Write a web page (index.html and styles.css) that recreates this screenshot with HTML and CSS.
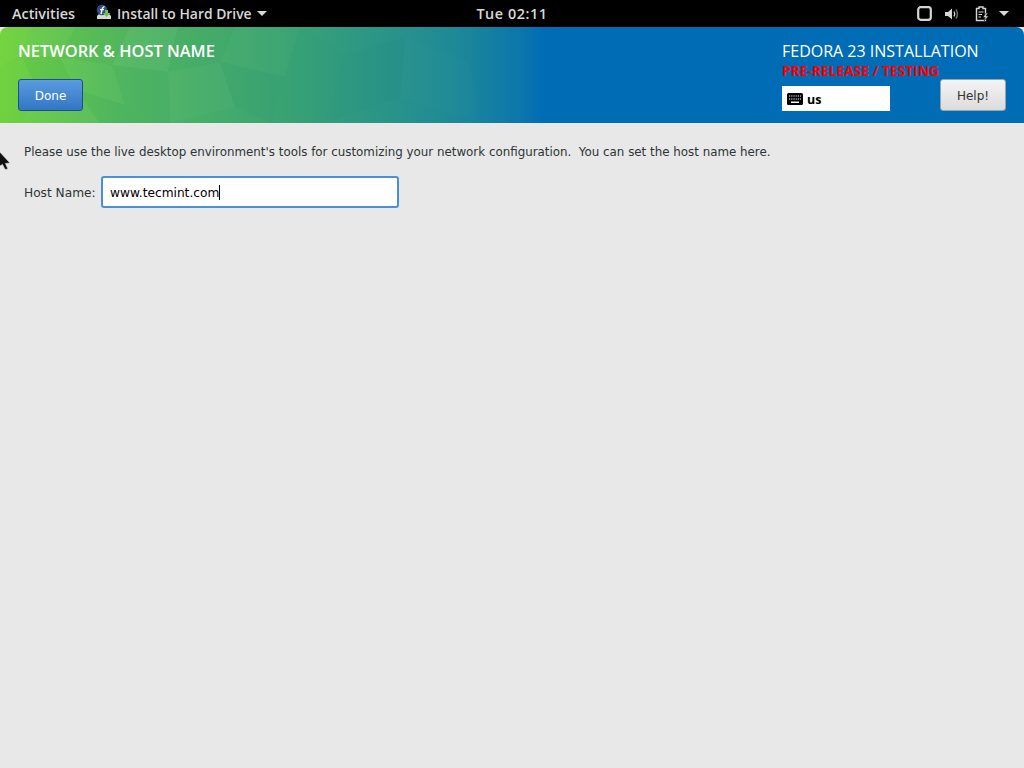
FILE: index.html
```html
<!DOCTYPE html>
<html lang="en">
<head>
<meta charset="utf-8">
<title>Network &amp; Host Name</title>
<link rel="stylesheet" href="styles.css">
</head>
<body>
<div class="topbar">
  <div class="top-left">
    <span class="top-item">Activities</span>
    <span class="app-menu">
      <svg class="app-icon" width="16" height="16" viewBox="0 0 16 16">
        <path d="M1 12 L4 9 H12 L15 12 V15 H1 Z" fill="#d8d8d0"/>
        <circle cx="6" cy="6" r="5.2" fill="#2b4f8f"/>
        <path d="M5 10 C6 7 5.5 3 8.5 2.6 M4 5.6 H8" stroke="#fff" stroke-width="1.4" fill="none"/>
        <path d="M9 6 H12 V9 H14.5 L10.5 13 L7 9 H9 Z" fill="#6cc04a"/>
      </svg>
      <span class="top-item">Install to Hard Drive</span>
      <span class="caret"></span>
    </span>
  </div>
  <div class="clock">Tue 02:11</div>
  <div class="top-right">
    <svg class="tray-window" width="15" height="15" viewBox="0 0 15 15"><rect x="1.2" y="1.2" width="12.6" height="12.6" rx="2.5" fill="none" stroke="#d6d6d6" stroke-width="2.2"/></svg>
    <svg class="tray-sound" width="16" height="14" viewBox="0 0 16 14">
      <path d="M1 5 H4 L8 1.5 V12.5 L4 9 H1 Z" fill="#d6d6d6"/>
      <path d="M10 4.5 Q11.5 7 10 9.5" stroke="#d6d6d6" stroke-width="1.4" fill="none"/>
      <path d="M12 2.5 Q14.7 7 12 11.5" stroke="#777" stroke-width="1.4" fill="none"/>
    </svg>
    <svg class="tray-battery" width="15" height="16" viewBox="0 0 15 16">
      <path d="M1.5 2.5 H4 V1 H8 V2.5 H10.5 V14.5 H1.5 Z" fill="none" stroke="#d6d6d6" stroke-width="1.4"/>
      <path d="M3.5 6 H8.5 M3.5 8.5 H7 M3.5 11 H6" stroke="#d6d6d6" stroke-width="1.2"/>
      <path d="M11 7 L8 11.5 H10.3 L9.2 15 L13.5 10 H11.2 L12.6 7 Z" fill="#d6d6d6" stroke="#000" stroke-width=".5"/>
    </svg>
    <span class="caret"></span>
  </div>
</div>
<header class="hub">
  <svg class="facets" width="560" height="96" viewBox="0 0 560 96" aria-hidden="true">
    <polygon points="0,0 30,0 22,28 0,40" fill="#8be04a" opacity=".18"/>
    <polygon points="30,0 75,0 60,30 22,28" fill="#fff" opacity=".025"/>
    <polygon points="0,40 22,28 38,66 0,96" fill="#7ed64a" opacity=".14"/>
    <polygon points="22,28 60,30 75,62 38,66" fill="#2c9a4a" opacity=".07"/>
    <polygon points="38,66 75,62 100,96 20,96" fill="#fff" opacity=".025"/>
    <polygon points="75,0 130,0 112,38 60,30" fill="#2c9a4a" opacity=".06"/>
    <polygon points="60,30 112,38 125,78 75,62" fill="#fff" opacity=".025"/>
    <polygon points="75,62 125,78 140,96 100,96" fill="#1f8a60" opacity=".08"/>
    <polygon points="130,0 178,0 168,45 112,38" fill="#fff" opacity=".035"/>
    <polygon points="112,38 168,45 170,96 140,96 125,78" fill="#1f8a60" opacity=".06"/>
    <polygon points="178,0 235,0 220,35 168,45" fill="#1f8a60" opacity=".05"/>
    <polygon points="168,45 220,35 235,80 170,96" fill="#fff" opacity=".025"/>
    <polygon points="235,0 300,0 285,50 220,35" fill="#fff" opacity=".015"/>
    <polygon points="220,35 285,50 270,96 235,80" fill="#0e6f70" opacity=".05"/>
    <polygon points="300,0 345,28 325,96 270,96 285,50" fill="#1f9a80" opacity=".04"/>
    <polygon points="345,28 405,10 400,70 325,96" fill="#04507a" opacity=".03"/>
    <polygon points="405,10 470,35 480,96 400,70" fill="#fff" opacity=".012"/>
  </svg>
  <div class="hub-left">
    <h1 class="hub-title">NETWORK &amp; HOST NAME</h1>
    <button class="btn btn-done">Done</button>
  </div>
  <div class="hub-right">
    <div class="hub-info">
      <div class="hub-product">FEDORA 23 INSTALLATION</div>
      <div class="hub-warning">PRE-RELEASE / TESTING</div>
      <div class="kbd">
        <svg width="16" height="12" viewBox="0 0 16 12"><rect width="16" height="12" rx="1.5" fill="#000"/><path d="M2 3 H14 M2 6 H14" stroke="#fff" stroke-width="1.2" stroke-dasharray="1.2 1"/><path d="M4 9.2 H12" stroke="#fff" stroke-width="1.4"/></svg>
        <span class="kbd-name">us</span>
      </div>
    </div>
    <button class="btn btn-help">Help!</button>
  </div>
</header>
<main class="content">
  <p class="note">Please use the live desktop environment's tools for customizing your network configuration.&nbsp; You can set the host name here.</p>
  <div class="host-row">
    <label class="host-label">Host Name:</label>
    <div class="host-input"><span>www.tecmint.com</span><i class="text-cursor"></i></div>
  </div>
</main>
<svg class="pointer" width="11" height="20" viewBox="0 0 11 20"><path d="M-2 0 L10 13 L5.5 13.5 L8 19 L5 19.5 L2.5 14.5 L-2 17 Z" fill="#111" stroke="#ddd" stroke-width=".7"/></svg>
</body>
</html>
```
FILE: styles.css
```css
* { box-sizing: border-box; }
html, body { margin: 0; height: 100%; }
body { width: 1024px; height: 768px; overflow: hidden; background: #e8e8e8; font-family: "DejaVu Sans", sans-serif; position: relative; }

.topbar { height: 27px; background: #000; color: #d8d8d8; display: grid; grid-template-columns: 1fr auto 1fr; align-items: center; font: 600 14.4px "Open Sans", sans-serif; padding: 0 12px; }
.top-left { display: flex; align-items: center; gap: 21px; }
.app-menu { display: flex; align-items: center; font-size: 13.9px; }
.app-icon { margin-right: 5px; margin-top: -3px; }
.caret { width: 0; height: 0; border: 5px solid transparent; border-top: 5px solid #d8d8d8; border-bottom: 0; margin-left: 5px; }
.clock { text-align: center; letter-spacing: .55px; }
.top-right { display: flex; align-items: center; justify-content: flex-end; padding-right: 3px; }
.tray-window { margin-right: 12px; }
.tray-sound { margin-right: 15px; }
.tray-battery { margin-right: 4px; }

.hub { position: relative; height: 96px; background: linear-gradient(90deg, #6fd23f 0%, #52b860 12%, #3aa373 28%, #1f8a96 44%, #0b76ab 51%, #006cb5 53%, #006cb5 100%); border-radius: 8px 8px 0 0; color: #fff; display: flex; justify-content: space-between; padding: 0 18px; overflow: hidden; }
.facets { position: absolute; left: 0; top: 0; }
.hub-left, .hub-right { position: relative; }
.hub-left { display: flex; flex-direction: column; align-items: flex-start; }
.hub-title { margin: 15px 0 0; font: 600 16.4px/18px "Open Sans", sans-serif; white-space: nowrap; }
.btn { font: 400 12px "DejaVu Sans", sans-serif; border-radius: 3px; padding: 2px 0 0; }
.btn-done { margin-top: 19px; width: 65px; height: 32px; color: #fff; border: 1px solid #1d4f8c; background: linear-gradient(#5b9bdf, #3276c4); }
.hub-right { display: flex; align-items: flex-start; }
.hub-info { width: 158px; padding-top: 15px; }
.hub-product { font: 400 16px/18px "Open Sans", sans-serif; white-space: nowrap; }
.hub-warning { font: 700 13.8px/16px "Open Sans", sans-serif; color: #f00; white-space: nowrap; margin-top: 3px; }
.kbd { margin-top: 7px; width: 108px; height: 25px; background: #fff; color: #000; display: flex; align-items: center; padding-left: 5px; gap: 4px; font: 700 12.5px "Open Sans", sans-serif; }
.kbd-name { padding-top: 2px; }
.btn-help { margin-top: 52px; width: 66px; height: 32px; color: #333; border: 1px solid #9aa4ae; background: linear-gradient(#f4f4f4, #dcdcdc); }

.content { padding: 21px 24px; color: #2e3436; font: 400 11.86px "DejaVu Sans", sans-serif; }
.note { margin: 0; line-height: 16px; white-space: nowrap; }
.host-row { display: flex; align-items: center; margin-top: 16px; }
.host-label { margin-right: 6px; width: 71px; white-space: nowrap; font-size: 12.2px; padding-top: 1px; }
.host-input { width: 298px; height: 32px; background: #fff; border: 2px solid #4a90d9; border-radius: 3px; padding: 1px 0 0 7px; display: flex; align-items: center; color: #000; font-size: 12.2px; }
.text-cursor { width: 1px; height: 15px; background: #000; }

.pointer { position: absolute; left: 0; top: 150px; }
```
